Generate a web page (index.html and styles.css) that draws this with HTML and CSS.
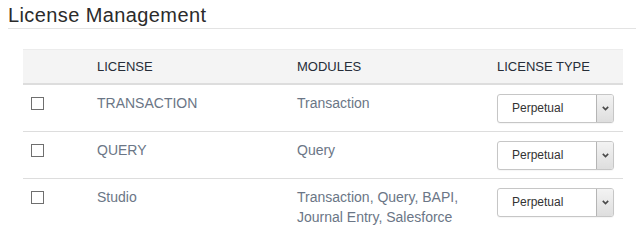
FILE: index.html
```html
<!DOCTYPE html>
<html>
<head>
<meta charset="utf-8">
<link rel="stylesheet" href="styles.css">
</head>
<body>
<div class="page">
  <h1 class="title">License Management</h1>
  <table class="licenses">
    <thead>
      <tr>
        <th class="c-check"></th>
        <th class="c-license">LICENSE</th>
        <th class="c-modules">MODULES</th>
        <th class="c-type">LICENSE TYPE</th>
      </tr>
    </thead>
    <tbody>
      <tr>
        <td class="c-check"><span class="box"></span></td>
        <td>TRANSACTION</td>
        <td>Transaction</td>
        <td><div class="select"><span class="value">Perpetual</span><span class="arrow"><svg width="7" height="5" viewBox="0 0 7 5"><path d="M0.8 0.9 L3.5 3.6 L6.2 0.9" fill="none" stroke="#4a4a4a" stroke-width="1.6"/></svg></span></div></td>
      </tr>
      <tr>
        <td class="c-check"><span class="box"></span></td>
        <td>QUERY</td>
        <td>Query</td>
        <td><div class="select"><span class="value">Perpetual</span><span class="arrow"><svg width="7" height="5" viewBox="0 0 7 5"><path d="M0.8 0.9 L3.5 3.6 L6.2 0.9" fill="none" stroke="#4a4a4a" stroke-width="1.6"/></svg></span></div></td>
      </tr>
      <tr>
        <td class="c-check"><span class="box"></span></td>
        <td>Studio</td>
        <td>Transaction, Query, BAPI,<br>Journal Entry, Salesforce</td>
        <td><div class="select"><span class="value">Perpetual</span><span class="arrow"><svg width="7" height="5" viewBox="0 0 7 5"><path d="M0.8 0.9 L3.5 3.6 L6.2 0.9" fill="none" stroke="#4a4a4a" stroke-width="1.6"/></svg></span></div></td>
      </tr>
    </tbody>
  </table>
</div>
</body>
</html>
```

FILE: styles.css
```css
html, body {
  margin: 0;
  padding: 0;
  background: #fff;
}
body {
  font-family: Arial, "Liberation Sans", Helvetica, sans-serif;
  color: #333;
}
.page {
  padding: 4px 0 0 8px;
}
.title {
  margin: 0;
  font-size: 20px;
  line-height: 22px;
  font-weight: normal;
  letter-spacing: 0.4px;
  color: #2b2b2b;
  padding-bottom: 2px;
  border-bottom: 1px solid #e3e3e3;
}
.licenses {
  margin: 20px 0 0 15px;
  width: 600px;
  border-collapse: collapse;
  table-layout: fixed;
}
.licenses th {
  background: #f4f4f4;
  text-align: left;
  font-weight: normal;
  font-size: 13px;
  line-height: 19px;
  color: #262d38;
  padding: 7px 8px;
  border-top: 1px solid #ececec;
  border-bottom: 2px solid #dddddd;
}
.c-check { width: 50px; }
.c-license { width: 184px; }
.c-modules { width: 184px; }
.c-type { width: 118px; }
.licenses td {
  font-size: 14px;
  line-height: 20px;
  color: #6b7686;
  padding: 8px;
  vertical-align: top;
  border-top: 1px solid #dddddd;
}
.licenses tbody tr:first-child td {
  border-top: 0;
}
.box {
  display: block;
  width: 11px;
  height: 11px;
  border: 1px solid #6f6f6f;
  background: #fff;
  margin-top: 4px;
}
.select {
  display: flex;
  box-sizing: border-box;
  width: 117px;
  height: 29px;
  margin-top: 1px;
  border: 1px solid #c6c6c6;
  border-radius: 3px;
  background: #fff;
  overflow: hidden;
  box-shadow: 0 1px 1px rgba(0,0,0,0.04);
}
.value {
  flex: 1;
  padding-left: 14px;
  font-size: 12px;
  line-height: 27px;
  color: #333;
}
.arrow {
  width: 16px;
  display: flex;
  align-items: center;
  justify-content: center;
  background: linear-gradient(#f3f3f3, #dedede);
  border-left: 1px solid #b5b5b5;
}
```
